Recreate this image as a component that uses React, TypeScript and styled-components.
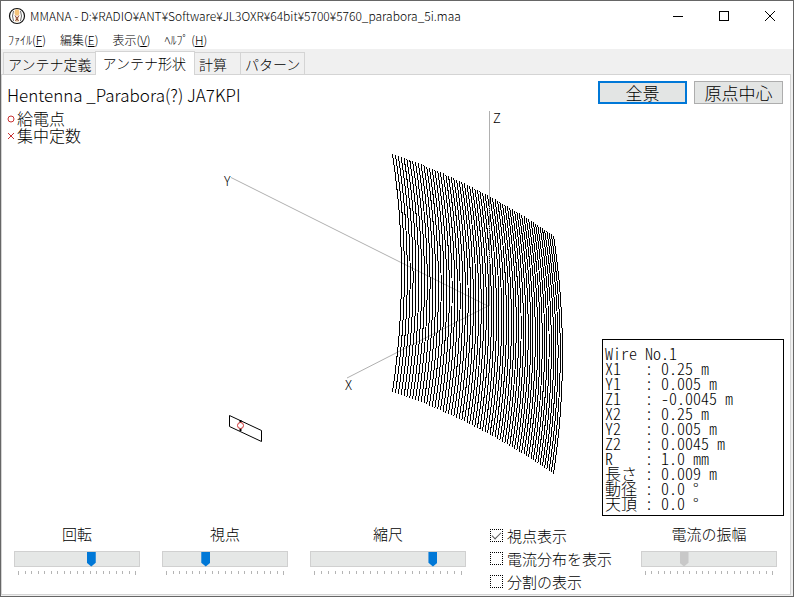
import React, { useState } from "react";
import styled, { createGlobalStyle } from "styled-components";

const Global = createGlobalStyle`
  *, *::before, *::after { box-sizing: border-box; }
  body {
    margin: 0;
    background: #fff;
    color: #000;
    font-family: "Noto Sans CJK JP", sans-serif;
    font-weight: 300;
  }
  button, input { font: inherit; color: inherit; }
`;

const Window = styled.div`
  display: flex;
  flex-direction: column;
  min-height: 100vh;
  border: 1px solid #666;
  background: #f0f0f0;
`;

const TitleBar = styled.header`
  display: flex;
  align-items: center;
  height: 30px;
  padding-left: 7px;
  background: #fff;
`;

const Title = styled.h1`
  flex: 1;
  margin: 0 0 0 4px;
  font-weight: 300;
  font-size: 12px;
  line-height: 16px;
  white-space: nowrap;
`;

const CaptionButton = styled.button`
  display: grid;
  place-items: center;
  width: 46px;
  height: 30px;
  padding: 0;
  border: 0;
  background: none;
`;

const MenuBar = styled.nav`
  display: flex;
  gap: 14px;
  height: 18px;
  padding-left: 7px;
  background: #fff;
`;

const MenuItem = styled.button`
  padding: 0;
  border: 0;
  background: none;
  font-size: 12px;
  line-height: 18px;
  white-space: nowrap;
`;

const TabStrip = styled.div`
  display: flex;
  align-items: flex-end;
  height: 25px;
  padding-left: 3px;
`;

const Tab = styled.button<{ $active?: boolean }>`
  position: relative;
  height: ${(p) => (p.$active ? 24 : 22)}px;
  min-width: 47px;
  margin: 0 0 ${(p) => (p.$active ? -1 : 0)}px -1px;
  padding: ${(p) => (p.$active ? "0 8px 2px 6px" : "0 4px")};
  z-index: ${(p) => (p.$active ? 1 : 0)};
  border: 1px solid #d4d4d4;
  border-bottom: 0;
  background: ${(p) => (p.$active ? "#fff" : "#f0f0f0")};
  font-size: 14px;
  line-height: 20px;
  text-align: left;
  white-space: nowrap;
`;

const Panel = styled.main`
  flex: 1;
  display: flex;
  flex-direction: column;
  margin: 0 2px 1px 0;
  border: 1px solid #d4d4d4;
  background: #fff;
`;

const View = styled.section`
  position: relative;
  flex: 1;
  display: flex;
  flex-direction: column;
  min-height: 441px;
`;

const Drawing = styled.svg`
  position: absolute;
  inset: 0;
  width: 100%;
  height: 100%;
  overflow: visible;
  pointer-events: none;
`;

const ViewHeader = styled.div`
  display: flex;
  align-items: flex-start;
  gap: 7px;
  padding: 6px 7px 0 5px;
`;

const AntennaName = styled.h2`
  flex: 1;
  margin: 0;
  font-weight: 300;
  font-size: 17px;
  line-height: 28px;
  white-space: nowrap;
`;

const PushButton = styled.button<{ $primary?: boolean }>`
  width: 89px;
  height: 23px;
  padding: 0;
  border: ${(p) => (p.$primary ? "2px solid #0078d7" : "1px solid #adadad")};
  background: #e3e5e4;
  font-size: 17px;
  line-height: ${(p) => (p.$primary ? 17 : 19)}px;
`;

const Legend = styled.ul`
  margin: 0;
  padding: 1px 0 0 5px;
  list-style: none;
  font-size: 16px;
  line-height: 17px;
`;

const LegendItem = styled.li`
  display: flex;
  align-items: center;
  gap: 2px;
`;

const InfoBox = styled.dl`
  align-self: flex-end;
  width: 182px;
  margin: auto 6px 0 0;
  padding: 6px 2px 4px;
  border: 1px solid #000;
  background: #fff;
  font-feature-settings: "hwid";
  font-size: 16px;
  line-height: 15px;
`;

const InfoRow = styled.div`
  display: flex;
  white-space: pre;
`;

const InfoKey = styled.dt<{ $wide?: boolean }>`
  width: ${(p) => (p.$wide ? "auto" : "40px")};
`;

const InfoValue = styled.dd`
  margin: 0;
`;

const Controls = styled.section`
  display: grid;
  grid-template-columns: 126fr 126fr 156fr 131fr 136fr;
  column-gap: 22px;
  height: 78px;
  padding: 8px 13px 0 12px;
`;

const SliderBox = styled.div`
  min-width: 0;
`;

const SliderLabel = styled.label`
  display: block;
  height: 22px;
  font-size: 15px;
  line-height: 20px;
  text-align: center;
  white-space: nowrap;
`;

const Range = styled.input`
  display: block;
  appearance: none;
  width: 100%;
  height: 16px;
  margin: 5px 0 0;
  border: 1px solid #d0d0d0;
  background: #e5e7e6;

  &::-webkit-slider-thumb {
    appearance: none;
    width: 9px;
    height: 15px;
    border: 0;
    background: #0078d7;
    clip-path: polygon(0 0, 100% 0, 100% 75%, 50% 100%, 0 75%);
  }
  &:disabled::-webkit-slider-thumb {
    background: #c8c8c8;
  }
`;

const Ticks = styled.div`
  display: flex;
  justify-content: space-between;
  margin: 4px 4px 0;
`;

const Tick = styled.i`
  width: 1px;
  height: 3px;
  background: #b4b4b4;
  &:first-child, &:last-child { height: 4px; }
`;

const Checks = styled.div`
  display: flex;
  flex-direction: column;
  min-width: 0;
  padding: 0 0 0 2px;
`;

const CheckLabel = styled.label`
  display: flex;
  align-items: center;
  gap: 4px;
  height: 23px;
  font-size: 15px;
  line-height: 23px;
  white-space: nowrap;
`;

const CheckBox = styled.input`
  appearance: none;
  flex: none;
  display: grid;
  place-items: center;
  width: 13px;
  height: 13px;
  margin: 0;
  border: 1px dotted #000;
  background: #fff;
  &:checked::after {
    content: "";
    width: 9px;
    height: 5px;
    border: solid #555;
    border-width: 0 0 1px 1px;
    transform: translateY(-1px) rotate(-45deg);
  }
`;

const WIRE_COUNT = 64;
const WIRE_HEIGHT = 238;
const BULGE = 9;

function wirePath(index: number) {
  const t = index / (WIRE_COUNT - 1);
  const dx = 161 * (1.14 * t - 0.14 * t * t);
  const x = 390.5 + dx;
  const top = 79 + 0.33 * dx + 0.0011 * dx * dx;
  const points: string[] = [];
  for (let k = 0; k <= 16; k++) {
    const s = k / 8 - 1;
    const px = x + BULGE * (1 - s * s);
    const py = top + (WIRE_HEIGHT * k) / 16;
    points.push(`${px.toFixed(1)} ${py.toFixed(1)}`);
  }
  return `M${points.join("L")}`;
}

const wires = Array.from({ length: WIRE_COUNT }, (_, i) => wirePath(i)).join("");

function AntennaDrawing() {
  return (
    <Drawing role="img" aria-label="アンテナ形状">
      <g stroke="#b0b0b0" fill="none" shapeRendering="crispEdges">
        <path d="M487.5 36V231" />
        <path d="M229 102.500L486 231L345 303" shapeRendering="auto" />
      </g>
      <path d={wires} stroke="#000" fill="none" shapeRendering="crispEdges" />
      <path d="M487.500 124V200" stroke="#a8a8a8" strokeDasharray="1 1" shapeRendering="crispEdges" />
      <path d="M227.500 340.500V351.500L259.500 366.500V355.500Z" fill="#fff" stroke="#000" />
      <path d="M238.500 345V356" stroke="#000" strokeWidth="2" />
      <circle cx="238.500" cy="350.500" r="3" fill="#fff" stroke="#d03030" />
      <g fontSize="13" fontFamily="Noto Sans CJK JP, sans-serif">
        <text x="491" y="48">Z</text>
        <text x="222" y="111">Y</text>
        <text x="343" y="315">X</text>
      </g>
    </Drawing>
  );
}

function AppIcon() {
  return (
    <svg width="18" height="18" viewBox="0 0 18 18" aria-hidden="true">
      <circle cx="9" cy="9" r="7.500" fill="#fff" stroke="#111" strokeWidth="1.200" />
      <path d="M5.500 4Q3.500 9 5.500 14M12.500 4Q14.500 9 12.500 14" fill="none" stroke="#444" strokeWidth="0.800" />
      <ellipse cx="9" cy="5.500" rx="2.400" ry="3.300" fill="#f5c37b" />
      <path d="M7 9.500L9 11L11 9.500L10.500 15H7.500Z" fill="#f3dfbd" />
      <path d="M7 8.500L9 11.500L11 8.500M7.500 14L9 11.500L10.500 14" fill="none" stroke="#7a2a1c" strokeWidth="0.900" />
    </svg>
  );
}

interface SliderProps {
  id: string;
  label: string;
  initial: number;
  ticks: number;
  disabled?: boolean;
}

function Slider({ id, label, initial, ticks, disabled }: SliderProps) {
  const [value, setValue] = useState(initial);
  return (
    <SliderBox>
      <SliderLabel htmlFor={id}>{label}</SliderLabel>
      <Range
        id={id}
        type="range"
        min={0}
        max={1000}
        value={value}
        disabled={disabled}
        onChange={(e) => setValue(Number(e.target.value))}
      />
      <Ticks>
        {Array.from({ length: ticks }, (_, i) => (
          <Tick key={i} />
        ))}
      </Ticks>
    </SliderBox>
  );
}

const menus = [
  ["ﾌｧｲﾙ(", "F"],
  ["編集(", "E"],
  ["表示(", "V"],
  ["ﾍﾙﾌﾟ (", "H"],
];

const info = [
  ["X1", "0.25 m"],
  ["Y1", "0.005 m"],
  ["Z1", "-0.0045 m"],
  ["X2", "0.25 m"],
  ["Y2", "0.005 m"],
  ["Z2", "0.0045 m"],
  ["R", "1.0 mm"],
  ["長さ", "0.009 m"],
  ["動径", "0.0 °"],
  ["天頂", "0.0 °"],
];

const tabs = ["アンテナ定義", "アンテナ形状", "計算", "パターン"];

export default function App() {
  return (
    <>
      <Global />
      <Window>
        <TitleBar>
          <AppIcon />
          <Title>MMANA - D:¥RADIO¥ANT¥Software¥JL3OXR¥64bit¥5700¥5760_parabora_5i.maa</Title>
          <CaptionButton aria-label="最小化">
            <svg width="10" height="10" stroke="#000" shapeRendering="crispEdges"><path d="M0 5.500H10" /></svg>
          </CaptionButton>
          <CaptionButton aria-label="最大化">
            <svg width="10" height="10" stroke="#000" fill="none" shapeRendering="crispEdges"><path d="M.5 .5H9.500V9.500H.5Z" /></svg>
          </CaptionButton>
          <CaptionButton aria-label="閉じる">
            <svg width="10" height="10" stroke="#000"><path d="M0 0L10 10M10 0L0 10" /></svg>
          </CaptionButton>
        </TitleBar>
        <MenuBar>
          {menus.map(([text, key]) => (
            <MenuItem key={key}>{text}<u>{key}</u>)</MenuItem>
          ))}
        </MenuBar>
        <TabStrip role="tablist">
          {tabs.map((t, i) => (
            <Tab key={t} role="tab" aria-selected={i === 1} $active={i === 1}>{t}</Tab>
          ))}
        </TabStrip>
        <Panel>
          <View>
            <AntennaDrawing />
            <ViewHeader>
              <AntennaName>Hentenna _Parabora(?) JA7KPI</AntennaName>
              <PushButton $primary>全景</PushButton>
              <PushButton>原点中心</PushButton>
            </ViewHeader>
            <Legend>
              <LegendItem>
                <svg width="8" height="8" fill="none" stroke="#c83232"><circle cx="4" cy="4" r="3" /></svg>
                給電点
              </LegendItem>
              <LegendItem>
                <svg width="8" height="8" stroke="#c83232"><path d="M1 1L7 7M7 1L1 7" /></svg>
                集中定数
              </LegendItem>
            </Legend>
            <InfoBox>
              <InfoRow><InfoKey $wide>Wire No.1</InfoKey></InfoRow>
              {info.map(([k, v]) => (
                <InfoRow key={k}>
                  <InfoKey>{k}</InfoKey>
                  <InfoValue>: {v}</InfoValue>
                </InfoRow>
              ))}
            </InfoBox>
          </View>
          <Controls>
            <Slider id="rotation" label="回転" initial={624} ticks={19} />
            <Slider id="viewpoint" label="視点" initial={333} ticks={19} />
            <Slider id="scale" label="縮尺" initial={810} ticks={22} />
            <Checks>
              <CheckLabel><CheckBox type="checkbox" defaultChecked />視点表示</CheckLabel>
              <CheckLabel><CheckBox type="checkbox" />電流分布を表示</CheckLabel>
              <CheckLabel><CheckBox type="checkbox" />分割の表示</CheckLabel>
            </Checks>
            <Slider id="amplitude" label="電流の振幅" initial={300} ticks={21} disabled />
          </Controls>
        </Panel>
      </Window>
    </>
  );
}
